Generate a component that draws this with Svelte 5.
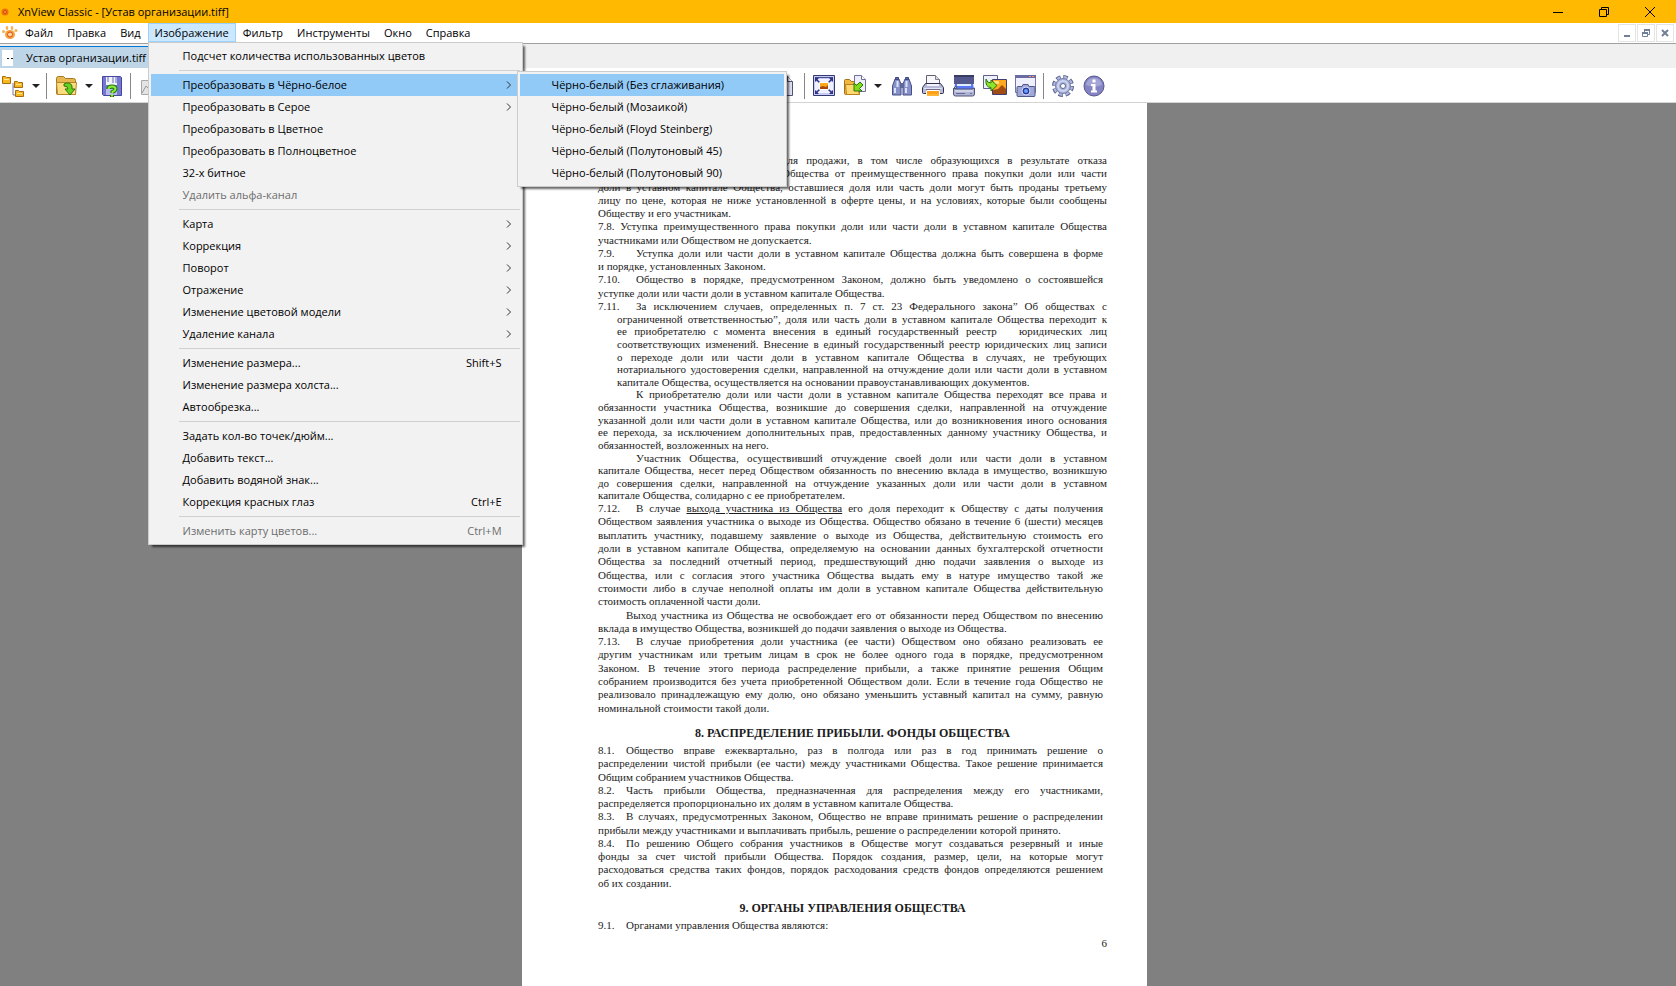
<script lang="ts">
	type Item = { label: string; keys?: string; disabled?: boolean; sub?: string[] | true };
	type Para = {
		num?: string;
		lines: string[];
		hang?: boolean;
		indent?: 'wide' | 'small' | 'tail';
		narrow?: boolean;
		short?: boolean;
	};

	const menus = ['Файл', 'Правка', 'Вид', 'Изображение', 'Фильтр', 'Инструменты', 'Окно', 'Справка'];
	let openMenu = $state('Изображение');
	let active = $state('Преобразовать в Чёрно-белое');

	const imageMenu: Item[][] = [
		[{ label: 'Подсчет количества использованных цветов' }],
		[
			{
				label: 'Преобразовать в Чёрно-белое',
				sub: [
					'Чёрно-белый (Без сглаживания)',
					'Чёрно-белый (Мозаикой)',
					'Чёрно-белый (Floyd Steinberg)',
					'Чёрно-белый (Полутоновый 45)',
					'Чёрно-белый (Полутоновый 90)'
				]
			},
			{ label: 'Преобразовать в Серое', sub: true },
			{ label: 'Преобразовать в Цветное' },
			{ label: 'Преобразовать в Полноцветное' },
			{ label: '32-х битное' },
			{ label: 'Удалить альфа-канал', disabled: true }
		],
		[
			{ label: 'Карта', sub: true },
			{ label: 'Коррекция', sub: true },
			{ label: 'Поворот', sub: true },
			{ label: 'Отражение', sub: true },
			{ label: 'Изменение цветовой модели', sub: true },
			{ label: 'Удаление канала', sub: true }
		],
		[
			{ label: 'Изменение размера...', keys: 'Shift+S' },
			{ label: 'Изменение размера холста...' },
			{ label: 'Автообрезка...' }
		],
		[
			{ label: 'Задать кол-во точек/дюйм...' },
			{ label: 'Добавить текст...' },
			{ label: 'Добавить водяной знак...' },
			{ label: 'Коррекция красных глаз', keys: 'Ctrl+E' }
		],
		[{ label: 'Изменить карту цветов...', keys: 'Ctrl+M', disabled: true }]
	];

	// * adds a drop-down arrow, | is a separator
	const tools = ['fit', 'copyto*', 'find', 'print', 'scan', 'convert', 'capture', '|', 'settings', 'info'];

	// every string is one printed line; _..._ marks underlined words
	const first: Para[] = [
		{
			indent: 'tail',
			lines: ['для продажи, в том числе образующихся в результате отказа', '']
		},
		{
			indent: 'tail',
			lines: ['Общества от преимущественного права покупки доли или части', '']
		},
		{
			lines: [
				'доли в уставном капитале Общества, оставшиеся доля или часть доли могут быть проданы третьему',
				'лицу по цене, которая не ниже установленной в оферте цены, и на условиях, которые были сообщены',
				'Обществу и его участникам.'
			]
		},
		{
			lines: [
				'7.8. Уступка преимущественного права покупки доли или части доли в уставном капитале Общества',
				'участниками или Обществом не допускается.'
			]
		},
		{
			num: '7.9.',
			narrow: true,
			lines: [
				'Уступка доли или части доли в уставном капитале Общества должна быть совершена в форме',
				'и порядке, установленных Законом.'
			]
		},
		{
			num: '7.10.',
			narrow: true,
			lines: [
				'Общество в порядке, предусмотренном Законом, должно быть уведомлено о состоявшейся',
				'уступке доли или части доли в уставном капитале Общества.'
			]
		}
	];

	const second: Para[] = [
		{
			num: '7.11.',
			hang: true,
			lines: [
				'За исключением случаев, определенных п. 7 ст. 23 Федерального закона” Об обществах с',
				'ограниченной ответственностью”, доля или часть доли в уставном капитале Общества переходит к',
				'ее приобретателю с момента внесения в единый государственный реестр \u00a0 юридических лиц',
				'соответствующих изменений. Внесение в единый государственный реестр юридических лиц записи',
				'о переходе доли или части доли в уставном капитале Общества в случаях, не требующих',
				'нотариального удостоверения сделки, направленной на отчуждение доли или части доли в уставном',
				'капитале Общества, осуществляется на основании правоустанавливающих документов.'
			]
		},
		{
			indent: 'wide',
			lines: [
				'К приобретателю доли или части доли в уставном капитале Общества переходят все права и',
				'обязанности участника Общества, возникшие до совершения сделки, направленной на отчуждение',
				'указанной доли или части доли в уставном капитале Общества, или до возникновения иного основания',
				'ее перехода, за исключением дополнительных прав, предоставленных данному участнику Общества, и',
				'обязанностей, возложенных на него.'
			]
		},
		{
			indent: 'wide',
			lines: [
				'Участник Общества, осуществивший отчуждение своей доли или части доли в уставном',
				'капитале Общества, несет перед Обществом обязанность по внесению вклада в имущество, возникшую',
				'до совершения сделки, направленной на отчуждение указанных доли или части доли в уставном',
				'капитале Общества, солидарно с ее приобретателем.'
			]
		}
	];

	const third: Para[] = [
		{
			num: '7.12.',
			narrow: true,
			lines: [
				'В случае _выхода участника из Общества_ его доля переходит к Обществу с даты получения',
				'Обществом заявления участника о выходе из Общества. Общество обязано в течение 6 (шести) месяцев',
				'выплатить участнику, подавшему заявление о выходе из Общества, действительную стоимость его',
				'доли в уставном капитале Общества, определяемую на основании данных бухгалтерской отчетности',
				'Общества за последний отчетный период, предшествующий дню подачи заявления о выходе из',
				'Общества, или с согласия этого участника Общества выдать ему в натуре имущество такой же',
				'стоимости либо в случае неполной оплаты им доли в уставном капитале Общества действительную',
				'стоимость оплаченной части доли.'
			]
		},
		{
			indent: 'small',
			narrow: true,
			lines: [
				'Выход участника из Общества не освобождает его от обязанности перед Обществом по внесению',
				'вклада в имущество Общества, возникшей до подачи заявления о выходе из Общества.'
			]
		},
		{
			num: '7.13.',
			narrow: true,
			lines: [
				'В случае приобретения доли участника (ее части) Обществом оно обязано реализовать ее',
				'другим участникам или третьим лицам в срок не более одного года в порядке, предусмотренном',
				'Законом. В течение этого периода распределение прибыли, а также принятие решения Общим',
				'собранием производится без учета приобретенной Обществом доли. Если в течение года Общество не',
				'реализовало принадлежащую ему долю, оно обязано уменьшить уставный капитал на сумму, равную',
				'номинальной стоимости такой доли.'
			]
		}
	];

	const fourth: Para[] = [
		{
			num: '8.1.',
			short: true,
			narrow: true,
			lines: [
				'Общество вправе ежеквартально, раз в полгода или раз в год принимать решение о',
				'распределении чистой прибыли (ее части) между участниками Общества. Такое решение принимается',
				'Общим собранием участников Общества.'
			]
		},
		{
			num: '8.2.',
			short: true,
			narrow: true,
			lines: [
				'Часть прибыли Общества, предназначенная для распределения между его участниками,',
				'распределяется пропорционально их долям в уставном капитале Общества.'
			]
		},
		{
			num: '8.3.',
			short: true,
			narrow: true,
			lines: [
				'В случаях, предусмотренных Законом, Общество не вправе принимать решение о распределении',
				'прибыли между участниками и выплачивать прибыль, решение о распределении которой принято.'
			]
		},
		{
			num: '8.4.',
			short: true,
			narrow: true,
			lines: [
				'По решению Общего собрания участников в Обществе могут создаваться резервный и иные',
				'фонды за счет чистой прибыли Общества. Порядок создания, размер, цели, на которые могут',
				'расходоваться средства таких фондов, порядок расходования средств фондов определяются решением',
				'об их создании.'
			]
		}
	];

	const fifth: Para[] = [{ num: '9.1.', short: true, lines: ['Органами управления Общества являются:'] }];
</script>

{#snippet icon(name: string)}
	<svg class="icon" viewBox="0 0 22 22" aria-hidden="true">
		{#if name === 'tree'}
			<path d="M11 8v12h3M11 12h3" fill="none" stroke="#7878a8" />
			<g fill="#f8b820" stroke="#a86c10">
				<path d="M.5 1.500h3l1 1h4v6h-8z" />
				<path d="M12.500 6.500h3l1 1h4v5h-8z" />
				<path d="M13.500 15.500h3l1 1h4v5h-8z" />
			</g>
			<path d="M2 4.500h5M14 9.500h5M15 18.500h5" stroke="#ffe890" />
		{:else if name === 'open'}
			<path d="M1.500 3.500q0-2 2-2h5l2 2h8q2 0 2 2v13q0 1-1 1h-17q-1 0-1-1z" fill="#e8b850" stroke="#a87820" />
			<path d="M1.500 7.500h20l-1 12h-18z" fill="#fbdc80" stroke="#b88828" />
			<path d="M9 9q6-3 8 2v3h3l-5 6-5-6h3q0-3-4-3z" fill="#68d020" stroke="#287808" />
		{:else if name === 'save'}
			<path d="M.5 1.500h18l1 1v18h-18l-1-1z" fill="#7478d0" stroke="#4448a0" />
			<path d="M4 2h11v8h-11z" fill="#f2f2fa" />
			<path d="M4 14h11v6h-11z" fill="#b8bce8" />
			<path d="M6 2v5M11 2v6M14 2v6" stroke="#6468b8" stroke-width="1" />
			<path d="M6.500 14q0-2.500 3.500-2.500t3.500 2.500q0 1.500-3 3v1M10 20v2" fill="none" stroke="#1c780c" stroke-width="4" />
			<path d="M6.500 14q0-2.500 3.500-2.500t3.500 2.500q0 1.500-3 3v1M10 19.500v2" fill="none" stroke="#90ec38" stroke-width="2" />
		{:else if name === 'picture'}
			<path d="M2.500 5.500v14h18v-14z" fill="#e4e4e4" stroke="#a8a8a8" />
			<path d="M3 18l4-7 4 4 7-11" fill="none" stroke="#989898" />
		{:else if name === 'page'}
			<path d="M-.5 1.500h12l5 5v14h-17z" fill="#e0e0f0" stroke="#50507c" />
			<path d="M11.500 1.500v5h5" fill="#fff" stroke="#50507c" />
		{:else if name === 'fit'}
			<path d="M.5.5h21v20h-21z" fill="#c8ccf8" stroke="#34386c" />
			<path d="M2 2.500h18" stroke="#484c88" />
			<path d="M5 4h12v14h-12zM2 7h18v8h-18z" fill="#f0f0ff" />
			<path d="M3 4l4 4M19 4l-4 4M3 18l4-4M19 18l-4-4" stroke="#303480" stroke-width="1.500" />
			<path d="M2 3h4l-4 4zM20 3v4l-4-4zM2 19v-4l4 4zM20 19h-4l4-4z" fill="#303480" />
			<path d="M6.500 7.500h9v7h-9z" fill="#ffa818" stroke="#fff" />
			<path d="M7 14v-2l3-1 3 1 2-2v4z" fill="#a84810" />
		{:else if name === 'copyto'}
			<path d="M.5 5.500q0-1 1-1h4l2 2h5v3h3v10h-14q-1 0-1-1z" fill="#f0b840" stroke="#a87018" />
			<path d="M10.500.5h7l4 4v12h-11z" fill="#eeeef8" stroke="#707098" />
			<path d="M17.500.5v4h4" fill="#fff" stroke="#707098" />
			<path d="M1.500 9.500h11l3 10h-13z" fill="#ffd870" stroke="#b88020" />
			<path d="M16 7l3 3-3.500 3.500 2.500 2.500h-8v-8l2.500 2.500z" fill="#80dc18" stroke="#287808" />
		{:else if name === 'find'}
			<path d="M4 4h4l2 5v11h-8.500v-9zM14 4h4l2.500 7v9h-8.500v-11z" fill="#8890c8" stroke="#484f88" />
			<path d="M9 8h4v5h-4z" fill="#606898" />
			<path d="M4.500 2.500h3v2h-3zM14.500 2.500h3v2h-3z" fill="#6068a8" stroke="#404880" />
			<path d="M4 13v5M6.500 6v6M15 13v5M15.500 6v6" stroke="#d8e4ff" stroke-width="2" />
		{:else if name === 'print'}
			<path d="M4.500 9.500v-9h9l4 4v5z" fill="#f8f8fc" stroke="#606070" />
			<path d="M13.500.5v4h4" fill="#ddd" stroke="#808090" />
			<path d="M3.500 8.500h15l3 4v5q0 1-1 1h-19q-1 0-1-1v-5z" fill="#b8b8d8" stroke="#303050" />
			<path d="M5 9h12v2h-12z" fill="#f4f4ff" />
			<path d="M2 13.500h18" stroke="#e4e4f8" stroke-width="1" />
			<path d="M4 14.500h14v2h-14z" fill="#202030" />
			<path d="M4.500 15.500h13v6h-13z" fill="#ffa018" stroke="#fff" />
			<path d="M5 20h12" stroke="#ffc850" stroke-width="1" />
		{:else if name === 'scan'}
			<path d="M1 0h20v9h-20z" fill="#54588c" />
			<path d="M1 0h20v2h-20z" fill="#383c60" />
			<path d="M2 9h18l1 5h-20z" fill="#5878f4" />
			<path d="M4 9h14v2h-14z" fill="#e0ecff" />
			<path d="M.5 13.500h3v-2h-1zM3 14h16l2.500-1v6q0 2-2 2h-17q-2 0-2-2v-5.500z" fill="#b0b4d4" stroke="#505478" />
			<path d="M2 16h18" stroke="#f0f0ff" stroke-width="1" />
			<path d="M3 18.500h9M17 18.500h2" stroke="#686c90" />
		{:else if name === 'convert'}
			<path d="M-.5.5h14v13h-14z" fill="#eef0fc" stroke="#606090" />
			<path d="M8.500 4.500h14v15h-14z" fill="#ffa820" stroke="#404070" />
			<path d="M9 19v-4l5-1 4-4 4 4v5z" fill="#a04c14" />
			<path d="M10 6h5v3h-5z" fill="#ffe080" />
			<path d="M2 4q1 4 5 4v-3l6 5.500-6 5.500v-3.500q-6 0-5-8.500z" fill="#90e428" stroke="#287808" />
		{:else if name === 'capture'}
			<path d="M.5.5h20v17h-20z" fill="#f0f0fc" stroke="#7078a8" />
			<path d="M0 0h21v3h-21z" fill="#686ca0" />
			<path d="M14 1.500h2M17 1.500h2" stroke="#ff8868" stroke-width="1" />
			<path d="M3 11.500h4l1-2h5l1 2h5q1 0 1 1v8q0 1-1 1h-16q-1 0-1-1v-8q0-1 1-1z" fill="#a0a8d8" stroke="#505888" />
			<circle cx="11" cy="16" r="4" fill="#283898" stroke="#d8dcff" />
			<circle cx="11" cy="16" r="2" fill="#68a0ff" />
		{:else if name === 'settings'}
			<circle cx="11" cy="11" r="9" fill="none" stroke="#59638f" stroke-width="4" stroke-dasharray="4.400 2.670" />
			<circle cx="11" cy="11" r="8.500" fill="none" stroke="#b0b8dc" stroke-width="3" stroke-dasharray="3 3.676" stroke-dashoffset="-.6" />
			<circle cx="11" cy="11" r="7.500" fill="#a8b0d8" stroke="#7880ac" />
			<circle cx="11" cy="11" r="5" fill="none" stroke="#ccd4f0" stroke-width="2" />
			<circle cx="11" cy="11" r="2.500" fill="#fff" stroke="#606898" />
		{:else if name === 'info'}
			<circle cx="11" cy="11" r="10" fill="#8484c4" stroke="#56568c" stroke-width="1" />
			<path d="M3 10q1-7 8-7t8 7q-8 3-16 0z" fill="#a4a4d8" />
			<path d="M9.500 4.500h3v3h-3zM8 9h4.500v6.500h1.500v2h-6v-2h1.500v-4.500h-1.500z" fill="#fff" />
		{/if}
	</svg>
{/snippet}

{#snippet tool(name: string, drop = false)}
	<span class="tool">
		<button aria-label={name}>{@render icon(name)}</button>
		{#if drop}
			<button class="caret" aria-label="{name} list"><i></i></button>
		{/if}
	</span>
{/snippet}

{#snippet paw()}
	<svg class="paw" viewBox="0 0 16 16" aria-hidden="true">
		<ellipse cx="8" cy="9.500" rx="5" ry="4.500" fill="#f8a040" />
		<circle cx="8" cy="9.500" r="2.500" fill="#ffd8a0" stroke="#d85010" />
		<g fill="#f8b048">
			<ellipse cx="1.500" cy="6.500" rx="1.500" ry="1.500" />
			<ellipse cx="5" cy="3" rx="1.300" ry="2" />
			<ellipse cx="10" cy="3" rx="1.300" ry="2" />
			<ellipse cx="14" cy="5.500" rx="1.500" ry="1.500" />
		</g>
	</svg>
{/snippet}

{#snippet run(paras: Para[])}
	{#each paras as p}
		{#each p.lines as line, i}
			{#if line}
				<span
					class="line"
					class:narrow={p.narrow}
					class:last={i === p.lines.length - 1}
					class:hang={p.hang && i > 0}
					class:wide={p.indent === 'wide' && i === 0}
					class:small={p.indent === 'small' && i === 0}
					class:tail={p.indent === 'tail'}
				>{#if p.num && i === 0}<b class="num" class:short={p.short}>{p.num}</b>{/if}{#each line.split('_') as part, k}{#if k % 2}<u>{part}</u>{:else}{part}{/if}{/each}</span>
			{/if}
		{/each}
	{/each}
{/snippet}

<div class="window">
	<header class="titlebar">
		<svg class="dot" viewBox="0 0 10 10" aria-hidden="true">
			<circle cx="5" cy="5" r="3.500" fill="#f07010" />
			<circle cx="5" cy="5" r="1.500" fill="#ffa040" stroke="#d04c08" />
		</svg>
		<h1>XnView Classic - [Устав организации.tiff]</h1>
		<div class="winbtns">
			<button aria-label="Свернуть"><svg viewBox="0 0 12 12"><path d="M1 6.500h10" /></svg></button>
			<button aria-label="Восстановить"><svg viewBox="0 0 12 12"><path d="M1.500 3.500h7v7h-7zM3.500 3.500v-2h7v7h-2" /></svg></button>
			<button aria-label="Закрыть"><svg viewBox="0 0 12 12"><path d="M1 1l10 10M11 1L1 11" /></svg></button>
		</div>
	</header>

	<nav class="menubar">
		{@render paw()}
		{#each menus as name}
			<div class="menu">
				<button class="top" class:open={openMenu === name} onclick={() => (openMenu = openMenu === name ? '' : name)}>{name}</button>
				{#if name === 'Изображение' && openMenu === name}
					<div class="popup main">
						{#each imageMenu as group, g}
							{#if g > 0}<hr />{/if}
							{#each group as item}
								<div class="entry">
									<button
										class="item"
										class:active={active === item.label}
										disabled={item.disabled}
										onmouseenter={() => (active = item.label)}
									>
										<span>{item.label}</span>
										{#if item.keys}<kbd>{item.keys}</kbd>{/if}
										{#if item.sub}
											<svg class="arrow" viewBox="0 0 6 8"><path d="M1 .5l3.500 3.500L1 7.500" /></svg>
										{/if}
									</button>
									{#if Array.isArray(item.sub) && active === item.label}
										<div class="popup sub">
											{#each item.sub as label, i}
												<button class="item" class:active={i === 0}><span>{label}</span></button>
											{/each}
										</div>
									{/if}
								</div>
							{/each}
						{/each}
					</div>
				{/if}
			</div>
		{/each}
		<div class="mdi">
			<button aria-label="Свернуть документ"><svg viewBox="0 0 10 10"><path d="M2 8h6" /></svg></button>
			<button aria-label="Восстановить документ"><svg viewBox="0 0 10 10"><path d="M3 2h6M1 5h6" /><path class="thin" d="M3.500 2v2M8.500 2v4.500h-1.500M1.500 5v3.500h5v-3.500" /></svg></button>
			<button aria-label="Закрыть документ"><svg viewBox="0 0 10 10"><path d="M2 2l6 6M8 2l-6 6" /></svg></button>
		</div>
	</nav>

	<div class="tabs">
		<button class="tab"><i class="thumb"></i>Устав организации.tiff</button>
	</div>

	<div class="toolbar">
		<div class="group">
			{@render tool('tree', true)}
			<i class="sep"></i>
			{@render tool('open', true)}
			{@render tool('save')}
			<i class="sep"></i>
			{@render tool('picture')}
		</div>
		<div class="group">
			{@render tool('page')}
			<i class="sep"></i>
			{#each tools as t}
				{#if t === '|'}
					<i class="sep"></i>
				{:else}
					{@render tool(t.replace('*', ''), t.endsWith('*'))}
				{/if}
			{/each}
		</div>
	</div>

	<main class="workspace">
		<article class="page">
			<div class="run eleven">{@render run(first)}</div>
			<div class="run tight">{@render run(second)}</div>
			<div class="run sixteen">{@render run(third)}</div>
			<h2>8. РАСПРЕДЕЛЕНИЕ ПРИБЫЛИ. ФОНДЫ ОБЩЕСТВА</h2>
			<div class="run eleven">{@render run(fourth)}</div>
			<h2>9. ОРГАНЫ УПРАВЛЕНИЯ ОБЩЕСТВА</h2>
			<div class="run">{@render run(fifth)}</div>
			<footer>6</footer>
		</article>
	</main>
</div>

<style>
	:global(body) {
		margin: 0;
	}

	.window {
		display: flex;
		flex-direction: column;
		min-height: 100vh;
		background: #f0f0f0;
		font: 11px/16px 'Open Sans', 'Noto Sans', sans-serif;
		color: #000;
	}

	button {
		margin: 0;
		padding: 0;
		border: 0;
		background: none;
		font: inherit;
		color: inherit;
	}

	.titlebar {
		display: flex;
		align-items: center;
		height: 23px;
		background: #ffb900;
	}

	.dot {
		width: 10px;
		height: 10px;
		margin-right: 8px;
	}

	h1 {
		margin: 0;
		font-size: 11px;
		font-weight: 400;
	}

	.winbtns {
		display: flex;
		margin-left: auto;
		padding-right: 3px;
	}

	.winbtns button {
		display: flex;
		align-items: center;
		justify-content: center;
		width: 46px;
		height: 20px;
	}

	.winbtns svg {
		width: 12px;
		height: 12px;
		fill: none;
		stroke: #000;
	}

	.menubar {
		display: flex;
		align-items: flex-start;
		height: 20px;
		background: #fff;
		border-bottom: 1px solid #a0a0a0;
	}

	.paw {
		width: 16px;
		height: 16px;
		margin: 2px 0 0 2px;
	}

	.menu {
		position: relative;
	}

	.top {
		height: 19px;
		padding: 0 7px;
		white-space: nowrap;
	}

	.top.open {
		background: #cce8ff;
		box-shadow: inset 0 0 0 1px #99d1ff;
	}

	.mdi {
		display: flex;
		gap: 1px;
		margin-left: auto;
		padding: 1px 2px 0 0;
	}

	.mdi button {
		display: flex;
		align-items: center;
		justify-content: center;
		width: 18px;
		height: 18px;
		border: 1px solid #e4e4e4;
		box-sizing: border-box;
	}

	.mdi svg {
		width: 10px;
		height: 10px;
		fill: none;
		stroke: #708098;
		stroke-width: 2;
	}

	.mdi .thin {
		stroke-width: 1;
	}

	.popup {
		position: absolute;
		z-index: 2;
		box-sizing: border-box;
		padding: 2px;
		border: 1px solid #ccc;
		background: #f2f2f2;
		box-shadow: 3px 3px 2px -1px rgba(0, 0, 0, 0.6);
	}

	.main {
		top: 100%;
		left: 0;
		width: 375px;
	}

	.sub {
		top: -3px;
		left: 366px;
		width: 270px;
	}

	.entry {
		position: relative;
	}

	.item {
		display: flex;
		align-items: center;
		width: 100%;
		height: 22px;
		padding: 0 8px 0 32px;
		white-space: nowrap;
	}

	.item.active {
		background: #91c9f7;
	}

	.item:disabled {
		color: #6d6d6d;
	}

	kbd {
		margin-left: auto;
		padding-right: 10px;
		font: inherit;
	}

	.arrow {
		width: 6px;
		height: 8px;
		margin-left: auto;
		fill: none;
		stroke: #333;
	}

	hr {
		height: 1px;
		margin: 3px 0 3px 28px;
		border: 0;
		background: #d0d0d0;
	}

	.tabs {
		display: flex;
		height: 22px;
		padding-top: 2px;
	}

	.tab {
		display: flex;
		align-items: center;
		width: 200px;
		padding-left: 2px;
		border-top: 1px solid #0078d7;
		background: #bdd5e6;
		white-space: nowrap;
	}

	.thumb {
		width: 11px;
		height: 16px;
		margin-right: 13px;
		background: linear-gradient(#222, #222) 5px 8px / 2px 1px no-repeat, linear-gradient(#222, #222) 9px 8px / 2px 1px no-repeat, #fff;
	}

	.toolbar {
		display: flex;
		gap: 615px;
		height: 33px;
		padding: 1px 0 0 2px;
		background: #fff;
		border-bottom: 1px solid #d4d4d4;
	}

	.group {
		display: flex;
		align-items: center;
		gap: 9px;
	}

	.tool {
		display: flex;
		align-items: center;
	}

	.tool button {
		display: flex;
	}

	.icon {
		width: 22px;
		height: 22px;
		overflow: visible;
	}

	.tool .caret {
		width: 16px;
		justify-content: flex-end;
	}

	.caret i {
		border: 4px solid transparent;
		border-top-color: #222;
		border-bottom: 0;
	}

	.sep {
		width: 1px;
		height: 26px;
		margin: 0 -1px 0 -3px;
		background: #888;
	}

	.workspace {
		display: flex;
		flex: 1;
		justify-content: center;
		padding-right: 7px;
		background: #808080;
	}

	.page {
		box-sizing: border-box;
		width: 625px;
		padding: 51px 40px 0 76px;
		background: #fff;
		color: #1c1c1c;
		font: 11px/12px 'Liberation Serif', 'Times New Roman', serif;
	}

	.run {
		display: grid;
		grid-auto-rows: 1fr;
	}

	.eleven {
		min-height: 146px;
	}

	.tight {
		min-height: 202px;
	}

	.sixteen {
		min-height: 213px;
	}

	.line {
		display: block;
		white-space: nowrap;
		text-align: justify;
		text-align-last: justify;
	}

	.line.last {
		text-align-last: left;
	}

	.narrow {
		padding-right: 4px;
	}

	.hang {
		padding-left: 19px;
	}

	.wide {
		padding-left: 38px;
	}

	.small {
		padding-left: 28px;
	}

	.tail {
		padding-left: 184px;
	}

	.num {
		display: inline-block;
		width: 38px;
		font-weight: 400;
		text-align-last: left;
	}

	.num.short {
		width: 28px;
	}

	h2 {
		margin: 12px 0 4px;
		font-size: 12px;
		line-height: 13px;
		text-align: center;
	}

	footer {
		margin-top: 6px;
		text-align: right;
	}
</style>
